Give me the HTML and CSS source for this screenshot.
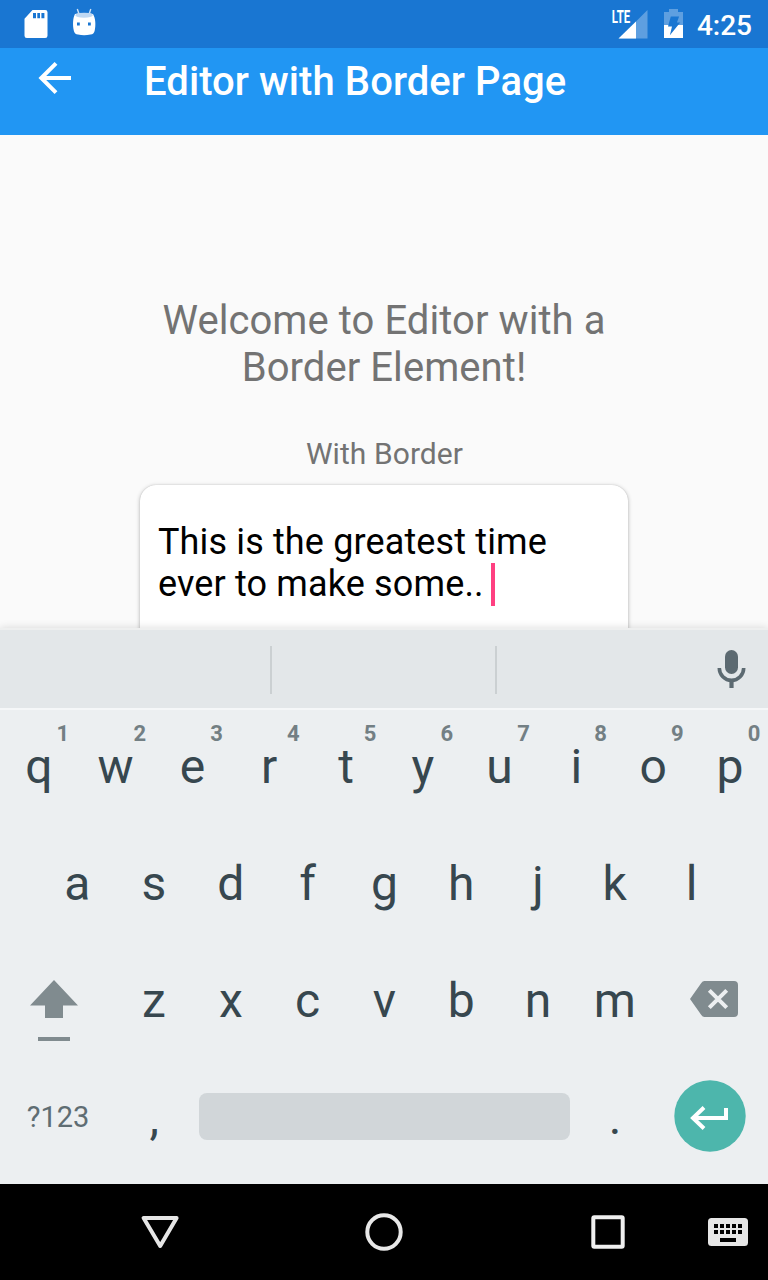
FILE: index.html
```html
<!DOCTYPE html>
<html lang="en">
<head>
<meta charset="utf-8">
<title>Editor with Border Page</title>
<link rel="stylesheet" href="styles.css">
</head>
<body>
<div class="screen">
  <header class="status">
    <svg class="sd" width="24" height="29" viewBox="0 0 24 29"><path fill="#fff" fill-rule="evenodd" d="M8.5 0H21.2Q23.5 0 23.5 2.3V25.7Q23.5 28 21.2 28H2.8Q.5 28 .5 25.7V8.7ZM9 3V8.3H12V3ZM13.3 3V8.3H16V3ZM17.4 3V8.3H20.4V3Z"/></svg>
    <svg class="droid" width="26" height="29" viewBox="0 0 26 29"><path stroke="#cfe1f5" stroke-width="1.4" fill="none" d="M5.3 1 7.2 6.5M18.8 1 17 6.5"/><path fill="#fff" d="M3 6Q12 4 21 6C23.5 10 24 17 22.6 23Q22 26 18.5 26.6Q12 27.8 6 26.6Q2.5 26 1.9 23C.5 17 .8 10 3 6Z"/><path fill="#bfd8f3" d="M3.2 7Q4 5.3 7 5Q12 4.3 17.5 5Q20.5 5.3 21 7Q20 9.6 12 9.8Q4 9.6 3.2 7Z"/><path fill="#1976d2" d="M5 14.6h2.8v2.8H5zM16 14.6h2.8v2.8H16z"/></svg>
    <span class="grow"></span>
    <svg class="signal" width="40" height="40" viewBox="608 0 40 40"><path fill="#5e9fe0" d="M647.5 10V38.5H619Z"/><path fill="#fff" d="M636 21.5V38.5H618.5Z"/><text class="lte" x="611.8" y="22.6" textLength="18.4" lengthAdjust="spacingAndGlyphs">LTE</text></svg>
    <svg class="battery" width="19" height="30" viewBox="664 8 19 30"><path fill="#5e9fe0" d="M669 9h9v3h5v13h-19V12h5z"/><path fill="#fff" d="M664 25h19v13h-19z"/><path fill="#1976d2" d="M670.8 16.5h8.3l-2.2 6.1h3.3l-10.3 12.6 2.1-8.7h-4z"/></svg>
    <span class="time">4:25</span>
  </header>
  <div class="appbar">
    <svg class="back" width="34" height="34" viewBox="38 61 34 34"><path fill="none" stroke="#fff" stroke-width="4" d="M56 63.3 41.3 78 56 92.7M41 78H71"/></svg>
    <h1 class="title">Editor with Border Page</h1>
  </div>
  <main class="page">
    <p class="welcome">Welcome to Editor with a<br>Border Element!</p>
    <p class="label">With Border</p>
    <div class="card">This is the greatest time<br>ever to make some.. <span class="caret"></span></div>
  </main>
  <section class="ime">
    <div class="suggest">
      <span class="cell first"></span><span class="cell second"></span>
      <span class="mic"><svg width="30" height="40" viewBox="716 649 30 40"><rect x="725" y="650" width="13" height="24" rx="6.5" fill="#5c6a71"/><path fill="none" stroke="#5c6a71" stroke-width="3.6" d="M719.3 668A12.2 12.4 0 0 0 743.7 668"/><path fill="#5c6a71" d="M729.4 680h4.2v8h-4.2z"/></svg></span>
    </div>
    <div class="keys">
      <div class="row top">
        <span class="key"><sup class="hint">1</sup>q</span><span class="key"><sup class="hint">2</sup>w</span><span class="key"><sup class="hint">3</sup>e</span><span class="key"><sup class="hint">4</sup>r</span><span class="key"><sup class="hint">5</sup>t</span><span class="key"><sup class="hint">6</sup>y</span><span class="key"><sup class="hint">7</sup>u</span><span class="key"><sup class="hint">8</sup>i</span><span class="key"><sup class="hint">9</sup>o</span><span class="key"><sup class="hint">0</sup>p</span>
      </div>
      <div class="row home">
        <span class="key">a</span><span class="key">s</span><span class="key">d</span><span class="key">f</span><span class="key">g</span><span class="key">h</span><span class="key">j</span><span class="key">k</span><span class="key">l</span>
      </div>
      <div class="row lower">
        <span class="key shift"><svg width="50" height="62" viewBox="29 980 50 62"><path fill="#808b8f" d="M54 980 78 1005.6H63V1018H45V1005.6H30ZM38 1037h32v4H38z"/></svg></span>
        <span class="key">z</span><span class="key">x</span><span class="key">c</span><span class="key">v</span><span class="key">b</span><span class="key">n</span><span class="key">m</span>
        <span class="key delete"><svg width="48" height="36" viewBox="690 981 48 36"><path fill="#808b8f" d="M704.5 981H734Q738 981 738 985V1013Q738 1017 734 1017H704.5Q702.5 1017 701.3 1015L690 999 701.3 983Q702.5 981 704.5 981Z"/><path stroke="#eceff1" stroke-width="4" d="M709.3 990.3 726.7 1007.7M726.7 990.3 709.3 1007.7"/></svg></span>
      </div>
      <div class="row bottom">
        <span class="key symbols">?123</span><span class="key punct">,</span><span class="space"></span><span class="key punct">.</span>
        <span class="key enter"><svg width="72" height="72" viewBox="674 1080 72 72"><circle cx="710" cy="1116" r="35.7" fill="#4db6ac"/><path fill="none" stroke="#fff" stroke-width="4" d="M704 1107.5 693 1118 704 1128.5M692.5 1118H726V1108"/></svg></span>
      </div>
    </div>
  </section>
  <nav class="nav">
    <svg class="nav-back" width="40" height="36" viewBox="140 1214 40 36"><path fill="none" stroke="#e6e6e6" stroke-width="4" stroke-linejoin="round" d="M143.6 1218H176.6L160.2 1246Z"/></svg>
    <svg class="nav-home" width="40" height="40" viewBox="0 0 40 40"><circle cx="20" cy="20" r="16.7" fill="none" stroke="#e8e8e8" stroke-width="4"/></svg>
    <svg class="nav-recent" width="34" height="34" viewBox="0 0 34 34"><rect x="2.3" y="2.3" width="29.4" height="29.4" rx="1" fill="none" stroke="#f0f0f0" stroke-width="4"/></svg>
    <svg class="nav-ime" width="40" height="28" viewBox="708 1218 40 28"><rect x="708" y="1218" width="40" height="28" rx="3.5" fill="#e6e6e6"/><path d="M714 1224h4v4h-4zm6 0h4v4h-4zm6 0h4v4h-4zm6 0h4v4h-4zm6 0h4v4h-4zM714 1230h4v4h-4zm6 0h4v4h-4zm6 0h4v4h-4zm6 0h4v4h-4zm6 0h4v4h-4zM720 1238h16v4h-16z"/></svg>
  </nav>
</div>
</body>
</html>
```
FILE: styles.css
```css
* { box-sizing: border-box; }
body { margin: 0; font-family: Roboto, "Liberation Sans", sans-serif; }
svg { display: block; flex: none; }
.screen { width: 768px; height: 1280px; display: flex; flex-direction: column; overflow: hidden; background: #fafafa; }

.status { height: 48px; flex: none; display: flex; align-items: flex-start; background: #1976d2; color: #fff; }
.sd { margin: 10px 0 0 24px; }
.droid { margin: 8px 0 0 24px; }
.grow { flex: 1; }
.signal { margin-right: 16px; }
.lte { font-size: 17.5px; font-weight: 700; fill: #fff; }
.battery { margin-top: 8px; }
.time { width: 85px; padding: 10px 16px 0 0; text-align: right; font-size: 28px; line-height: 32px; font-weight: 500; }

.appbar { height: 87px; flex: none; display: flex; align-items: flex-start; background: #2196f3; color: #fff; }
.back { margin: 13px 0 0 38px; }
.title { margin: 10px 0 0 72px; font-size: 40px; line-height: 47px; font-weight: 500; letter-spacing: .07px; white-space: nowrap; }

.page { height: 493px; flex: none; overflow: hidden; padding-top: 162px; text-align: center; color: #737373; }
.welcome { margin: 0; font-size: 40px; line-height: 47px; letter-spacing: .07px; }
.label { margin: 45px 0 0; padding-left: 1px; font-size: 30px; line-height: 36px; letter-spacing: .07px; }
.card { width: 488px; height: 200px; margin: 13px auto 0; padding: 36px 18px; border-radius: 16px; background: #fff; box-shadow: 0 1px 4px rgba(0,0,0,.28), 0 0 1px rgba(0,0,0,.2); color: #000; font-size: 36px; line-height: 42px; letter-spacing: .14px; text-align: left; white-space: nowrap; }
.caret { display: inline-block; width: 4px; height: 43px; margin: 0 0 -1px -2px; vertical-align: bottom; background: #ff4081; }

.ime { height: 556px; flex: none; box-shadow: 0 0 8px rgba(0,0,0,.14); background: #eceff1; position: relative; }
.suggest { height: 82px; display: flex; align-items: center; background: #e3e7e9; border-top: 2px solid #eeefef; border-bottom: 2px solid #f5f7f8; }
.cell { height: 48px; margin-top: 2px; border-right: 2px solid #cbd0d2; }
.first { width: 272px; }
.second { width: 225px; }
.mic { margin-left: 219px; }
.keys { height: 474px; color: #37474f; font-size: 48px; line-height: 56px; }
.row { height: 117px; display: flex; }
.key { width: 76.8px; padding: 0 0 4px .8px; display: flex; align-items: center; justify-content: center; position: relative; }
.hint { position: absolute; top: 11px; right: 7.6px; font-size: 22px; line-height: 26px; font-weight: 700; color: #737f84; }
.home { justify-content: center; }
.shift { width: 115.2px; padding: 16px 7px 0 0; }
.delete { width: 115.2px; padding: 0 0 7px 8px; }
.bottom { align-items: center; padding-bottom: 7px; }
.bottom .key { padding-bottom: 0; }
.bottom .symbols { width: 115.2px; padding-top: 2px; font-size: 29px; color: #5f6d73; }
.bottom .punct { padding: 3px 0 0 1.4px; }
.space { width: 371px; height: 47px; margin: 0 6px 0 7px; border-radius: 8px; background: #d1d6d9; }
.bottom .enter { width: 115.2px; padding-left: 0; }

.nav { height: 96px; flex: none; display: flex; align-items: center; background: #000; }
.nav-back { margin-left: 140px; }
.nav-home { margin-left: 184px; }
.nav-recent { margin-left: 187px; }
.nav-ime { margin-left: 83px; }
```
